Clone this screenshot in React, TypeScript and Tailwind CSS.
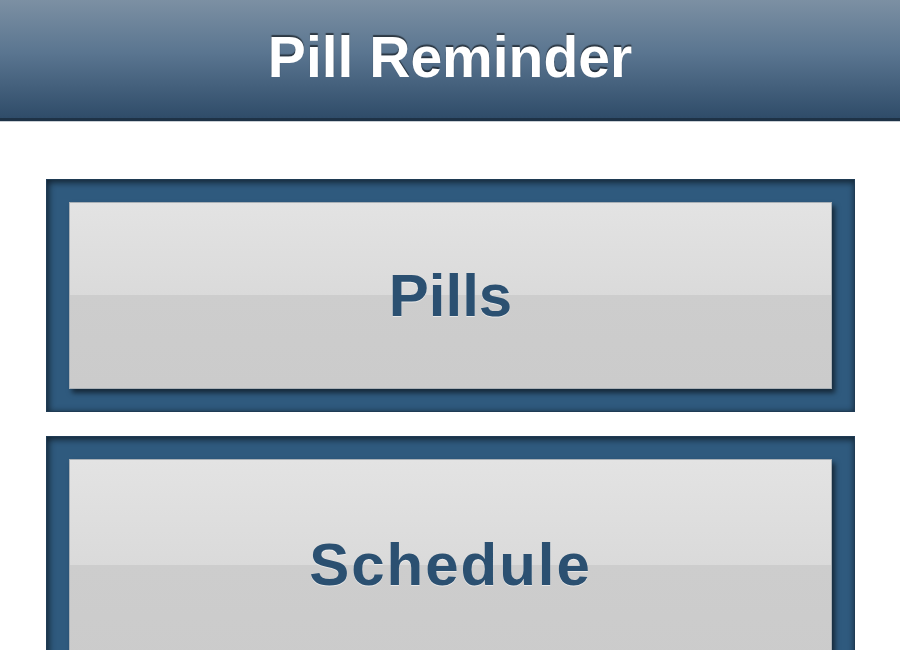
import React from 'react';

const MenuButton: React.FC<{ label: string; tall?: boolean }> = ({ label, tall }) => (
  <div
    className={`${tall ? 'h-[258px]' : 'h-[233px]'} border border-[#1f3b54] bg-[#2f5a7e] p-[22px] shadow-[inset_0_3px_6px_rgba(0,0,0,0.45),inset_3px_0_6px_rgba(0,0,0,0.3)]`}
  >
    <button className="flex h-full w-full items-center justify-center border border-[#a9b0b6] bg-[linear-gradient(to_bottom,#e3e3e3_0%,#dadada_50%,#cdcdcd_50%,#cbcbcb_100%)] shadow-[3px_4px_5px_rgba(0,0,0,0.55)]">
      <span
        className={`${tall ? 'tracking-[2px]' : ''} font-['Liberation_Sans',Arial,sans-serif] text-[60px] font-bold leading-none text-[#2b5071] [text-shadow:0_1px_0_rgba(255,255,255,0.5)]`}
      >
        {label}
      </span>
    </button>
  </div>
);

const App: React.FC = () => {
  return (
    <div className="h-[650px] w-[900px] overflow-hidden bg-white">
      <header className="flex h-[121px] items-center justify-center border-b-[3px] border-[#1e3246] bg-[linear-gradient(to_bottom,#7c90a3_0%,#5a7590_45%,#2f4c69_100%)] shadow-[0_1px_0_#c9cfd5]">
        <h1 className="pb-1 font-['Liberation_Sans',Arial,sans-serif] text-[57px] font-bold leading-none text-white [text-shadow:0_-2px_1px_rgba(0,0,0,0.55)]">
          Pill Reminder
        </h1>
      </header>

      <main className="flex flex-col gap-[24px] pl-[46px] pr-[45px] pt-[58px]">
        <MenuButton label="Pills" />
        <MenuButton label="Schedule" tall />
      </main>
    </div>
  );
};

export default App;
